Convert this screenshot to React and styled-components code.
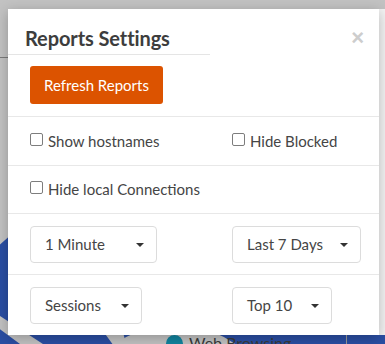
import React from "react";
import styled, { createGlobalStyle } from "styled-components";

const Global = createGlobalStyle`
  html, body { margin: 0; padding: 0; }
  body {
    background: #bdbdbd;
    overflow: hidden;
    font-family: Lato, "Noto Sans", sans-serif;
  }
`;

const Stage = styled.div`
  position: relative;
  width: 385px;
  height: 344px;
  overflow: hidden;
  background: #bdbdbd;
`;

const Behind = styled.div`
  position: absolute;
  inset: 0;
  background: #c2c2c2;
`;

const HeaderRule = styled.div`
  position: absolute;
  left: 0;
  top: 57px;
  width: 20px;
  height: 1px;
  background: #7a7a7a;
`;

const Legend = styled.div`
  position: absolute;
  left: 166px;
  top: 334px;
  display: flex;
  align-items: center;
  gap: 6px;
  font-size: 16px;
  line-height: 18px;
  color: #3a3a3a;
`;

const Dot = styled.span`
  width: 17px;
  height: 17px;
  border-radius: 50%;
  background: #11849f;
`;

const VRule = styled.div`
  position: absolute;
  left: 346px;
  top: 330px;
  width: 1px;
  height: 20px;
  background: #9a9a9a;
`;

const Chart = styled.svg`
  position: absolute;
  left: 0;
  top: 0;
`;

const Dialog = styled.div`
  position: relative;
  z-index: 1;
  margin: 9px 0 0 8px;
  display: flex;
  height: 326px;
`;

const Panel = styled.div`
  position: relative;
  width: 371px;
  background: #fff;
  box-shadow: 0 3px 12px rgba(0, 0, 0, 0.25);
  display: flex;
  flex-direction: column;
`;

const Track = styled.div`
  width: 6px;
  background: #f3f3f3;
`;

const TitleBar = styled.div`
  width: 185px;
  height: 45px;
  padding-left: 17px;
  border-bottom: 1px solid #e5e5e5;
  box-sizing: content-box;
  display: flex;
  align-items: flex-end;
`;

const Title = styled.h4`
  margin: 0 0 4px;
  font-size: 20px;
  font-weight: 700;
  color: #3d3d3d;
  line-height: 24px;
  letter-spacing: -0.1px;
`;

const Close = styled.button`
  position: absolute;
  right: 15px;
  top: 18px;
  border: 0;
  background: none;
  padding: 0;
  font-family: "Liberation Sans", Arial, sans-serif;
  font-size: 22px;
  font-weight: 700;
  line-height: 22px;
  color: #cdcdcd;
  cursor: pointer;
`;

const Section = styled.div`
  box-sizing: border-box;
  height: ${(p) => p.h}px;
  padding-left: 22px;
  border-top: ${(p) => (p.first ? "0" : "1px solid #e8e8e8")};
  display: grid;
  grid-template-columns: 202px 1fr;
  align-items: center;
`;

const RefreshButton = styled.button`
  width: 133px;
  height: 38px;
  border: 0;
  border-radius: 3px;
  background: #dc5300;
  color: #fff;
  font-family: inherit;
  font-size: 15px;
  padding: 0;
  cursor: pointer;
`;

const Check = styled.label`
  display: flex;
  align-items: center;
  gap: 5px;
  font-size: 15px;
  color: #454545;
  margin-top: 0;
`;

const Box = styled.span`
  width: 11px;
  height: 11px;
  border: 1px solid #7d7d7d;
  border-radius: 2px;
  margin-top: -3px;
  background: #fff;
`;

const Select = styled.div`
  box-sizing: border-box;
  width: ${(p) => p.w}px;
  height: 37px;
  border: 1px solid #dcdcdc;
  border-radius: 4px;
  padding: 0 12px 0 14px;
  display: flex;
  align-items: center;
  justify-content: space-between;
  font-size: 15px;
  color: #454545;
`;

const Caret = styled.span`
  width: 0;
  height: 0;
  border-left: 4px solid transparent;
  border-right: 4px solid transparent;
  border-top: 4px solid #333;
  margin-top: 1px;
`;

function Checkbox({ children }) {
  return (
    <Check>
      <Box />
      {children}
    </Check>
  );
}

function Dropdown({ w, children }) {
  return (
    <Select w={w}>
      <span>{children}</span>
      <Caret />
    </Select>
  );
}

export default function App() {
  return (
    <>
      <Global />
      <Stage>
        <Behind>
          <HeaderRule />
          <Chart width="385" height="344" viewBox="0 0 385 344">
            <circle cx="175" cy="430" r="180" fill="none" stroke="#2a4ea3" strokeWidth="150" />
            <path d="M175 430 L-40 290 L-40 300 L20 344 Z" fill="#c2c2c2" />
            <path d="M175 430 L95 320 L120 320 L130 360 Z" fill="#c2c2c2" />
          </Chart>
          <Legend>
            <Dot />
            Web Browsing
          </Legend>
          <VRule />
        </Behind>
        <Dialog>
          <Panel>
            <TitleBar>
              <Title>Reports Settings</Title>
            </TitleBar>
            <Close aria-label="Close">×</Close>
            <Section h={61} first>
              <RefreshButton>Refresh Reports</RefreshButton>
            </Section>
            <Section h={49}>
              <Checkbox>Show hostnames</Checkbox>
              <Checkbox>Hide Blocked</Checkbox>
            </Section>
            <Section h={49}>
              <Checkbox>Hide local Connections</Checkbox>
            </Section>
            <Section h={61}>
              <Dropdown w={127}>1 Minute</Dropdown>
              <Dropdown w={129}>Last 7 Days</Dropdown>
            </Section>
            <Section h={61}>
              <Dropdown w={112}>Sessions</Dropdown>
              <Dropdown w={100}>Top 10</Dropdown>
            </Section>
          </Panel>
          <Track />
        </Dialog>
      </Stage>
    </>
  );
}
